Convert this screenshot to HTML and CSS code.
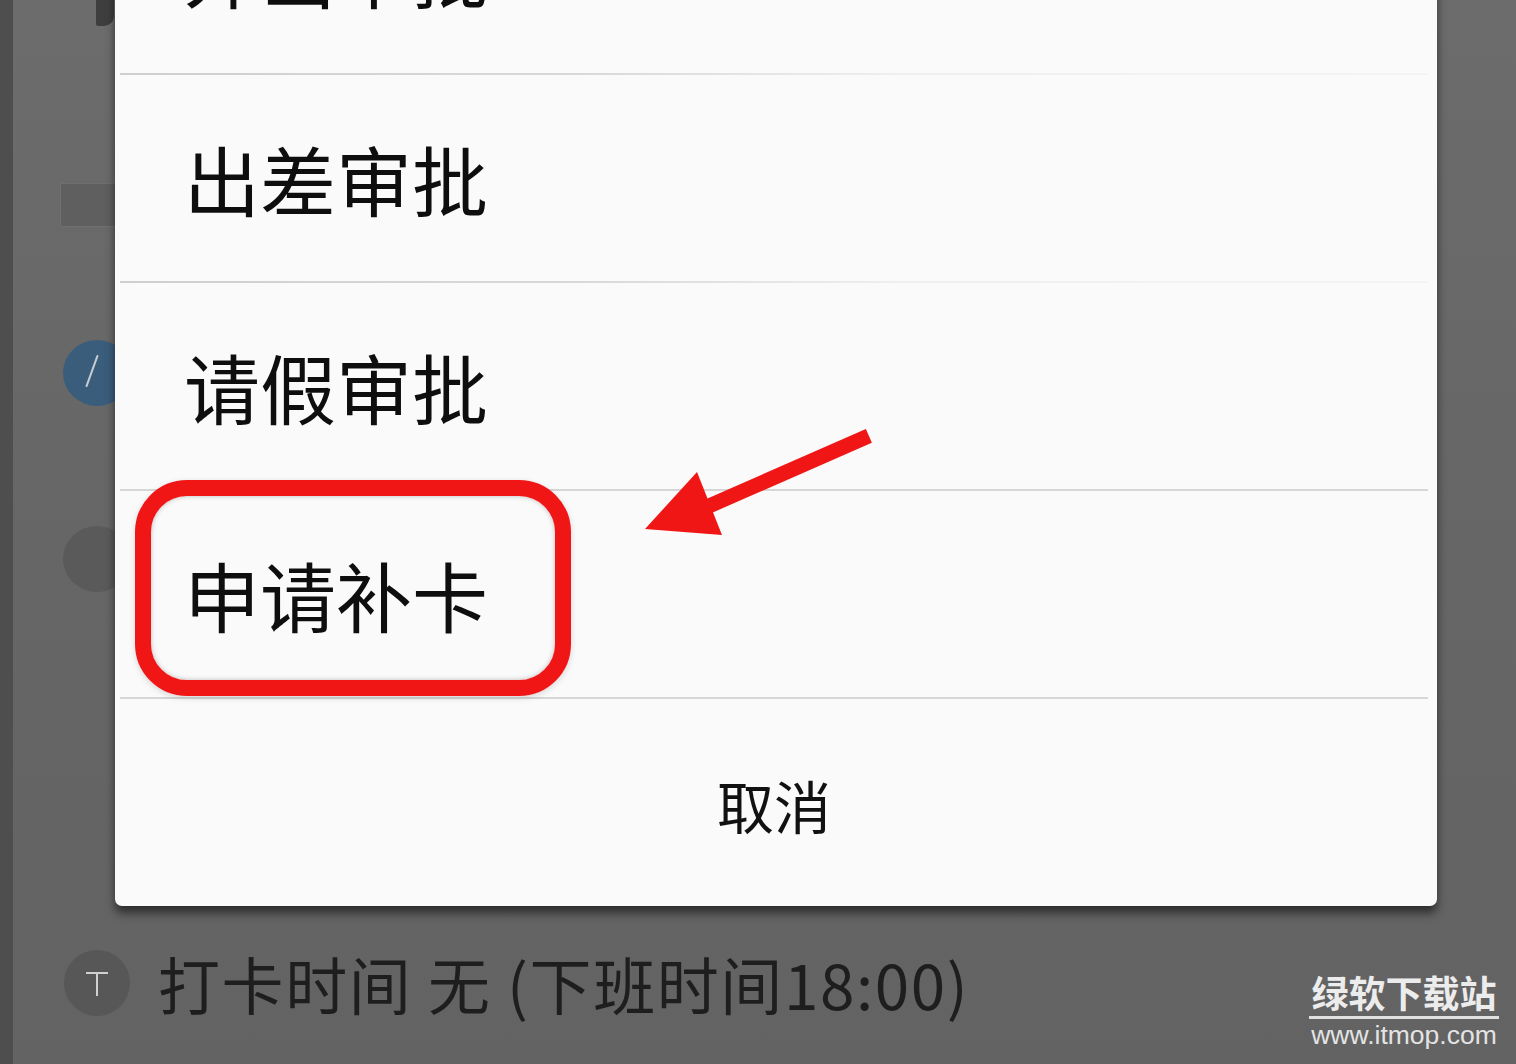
FILE: index.html
```html
<!DOCTYPE html>
<html lang="zh-CN">
<head>
<meta charset="utf-8">
<title>申请补卡</title>
<link rel="stylesheet" href="styles.css">
</head>
<body>
<div class="screen">
  <div class="page">
    <div class="bg-top-icon"></div>
    <div class="bg-square"></div>
    <div class="bg-avatar blue"><span class="slash"></span></div>
    <div class="bg-avatar grey"></div>
    <div class="bg-row">
      <div class="bg-dot"><span class="t-bar"></span><span class="t-stem"></span></div>
      <div class="bg-text">打卡时间 无 (下班时间18:00)</div>
    </div>
  </div>

  <div class="sheet">
    <div class="sheet-item">外出审批</div>
    <div class="divider short"></div>
    <div class="sheet-item">出差审批</div>
    <div class="divider short"></div>
    <div class="sheet-item">请假审批</div>
    <div class="divider"></div>
    <div class="sheet-item">申请补卡</div>
    <div class="divider"></div>
    <div class="sheet-cancel">取消</div>
  </div>

  <div class="highlight"></div>

  <svg class="arrow" width="240" height="130" viewBox="0 0 240 130">
    <line x1="222" y1="14" x2="62" y2="84" stroke="#f01616" stroke-width="15" stroke-linecap="square"/>
    <polygon points="5,104 57,47 82,110" fill="#f01616"/>
  </svg>

  <div class="watermark">
    <div class="wm-title">绿软下载站</div>
    <div class="wm-url">www.itmop.com</div>
  </div>
</div>
</body>
</html>
```

FILE: styles.css
```css
* { box-sizing: border-box; }

html, body {
  margin: 0;
  padding: 0;
}

body {
  width: 1516px;
  height: 1064px;
  overflow: hidden;
  background: #676767;
  font-family: "Noto Sans CJK SC", "Noto Sans", sans-serif;
}

.screen {
  position: relative;
  width: 1516px;
  height: 1064px;
  overflow: hidden;
  background: linear-gradient(180deg, #6c6c6c 0%, #666666 50%, #636363 100%);
}

/* dimmed page behind the sheet */
.page {
  display: flex;
  flex-direction: column;
  height: 100%;
  border-left: 13px solid #4e4e4e;
  padding-left: 47px;
}

.bg-top-icon {
  width: 18px;
  height: 26px;
  margin-left: 36px;
  background: #3e3e3e;
  border-radius: 0 0 10px 2px;
}

.bg-square {
  width: 60px;
  height: 44px;
  margin-top: 157px;
  background: #5f5f5f;
  border: 1px solid #6f6f6f;
}

.bg-avatar {
  width: 68px;
  height: 66px;
  border-radius: 50%;
  margin-left: 3px;
  position: relative;
}

.bg-avatar.blue {
  margin-top: 113px;
  background: #3b5d7c;
}

.bg-avatar .slash {
  position: absolute;
  left: 28px;
  top: 14px;
  width: 2px;
  height: 34px;
  background: #c8ccd0;
  border-radius: 2px;
  transform: rotate(20deg);
}

.bg-avatar.grey {
  margin-top: 120px;
  background: #5a5a5a;
}

.bg-row {
  display: flex;
  align-items: center;
  gap: 28px;
  margin-top: auto;
  margin-bottom: 48px;
  margin-left: 4px;
}

.bg-dot {
  position: relative;
  width: 66px;
  height: 66px;
  border-radius: 50%;
  background: #575757;
  flex: none;
}

.bg-dot .t-bar {
  position: absolute;
  left: 22px;
  top: 22px;
  width: 22px;
  height: 2px;
  background: #d0d0d0;
}

.bg-dot .t-stem {
  position: absolute;
  left: 32px;
  top: 22px;
  width: 2px;
  height: 24px;
  background: #d0d0d0;
}

.bg-text {
  font-size: 62px;
  line-height: 1;
  color: #1e1e1e;
  white-space: nowrap;
  letter-spacing: 1.6px;
}

/* action sheet */
.sheet {
  position: absolute;
  left: 115px;
  top: -133px;
  width: 1322px;
  height: 1039px;
  background: #fafafa;
  border-radius: 0 0 7px 7px;
  box-shadow: 0 7px 10px rgba(0, 0, 0, 0.55);
  display: flex;
  flex-direction: column;
}

.sheet-item {
  height: 206px;
  display: flex;
  align-items: center;
  padding-left: 69px;
  font-size: 76px;
  line-height: 1;
  color: #0e0e0e;
  letter-spacing: 0;
}

.divider {
  height: 2px;
  margin: 0 9px 0 5px;
  background: #d6d6d6;
  flex: none;
}

.divider.short {
  background: linear-gradient(90deg, #cfcfcf 0%, #d8d8d8 35%, #efefef 60%, #f4f4f4 100%);
}

.sheet-cancel {
  flex: 1;
  display: flex;
  align-items: center;
  justify-content: center;
  font-size: 57px;
  line-height: 1;
  color: #111;
  padding-top: 4px;
  padding-right: 4px;
}

/* annotation */
.highlight {
  position: absolute;
  left: 135px;
  top: 480px;
  width: 436px;
  height: 216px;
  border: 16px solid #f01616;
  border-radius: 52px;
  box-shadow: inset 0 0 5px rgba(0, 0, 0, 0.25), 0 2px 6px rgba(0, 0, 0, 0.15);
}

.arrow {
  position: absolute;
  left: 640px;
  top: 425px;
}

.watermark {
  position: absolute;
  left: 1309px;
  top: 970px;
  width: 190px;
  display: flex;
  flex-direction: column;
  align-items: stretch;
}

.wm-title {
  font-size: 37px;
  font-weight: 700;
  line-height: 44px;
  color: #ececec;
  border-bottom: 3px solid #e0e0e0;
  text-align: center;
  padding-bottom: 2px;
  white-space: nowrap;
}

.wm-url {
  font-family: "Liberation Sans", Arial, sans-serif;
  font-size: 26.5px;
  line-height: 32px;
  color: #e4e4e4;
  text-align: center;
  white-space: nowrap;
}
```
